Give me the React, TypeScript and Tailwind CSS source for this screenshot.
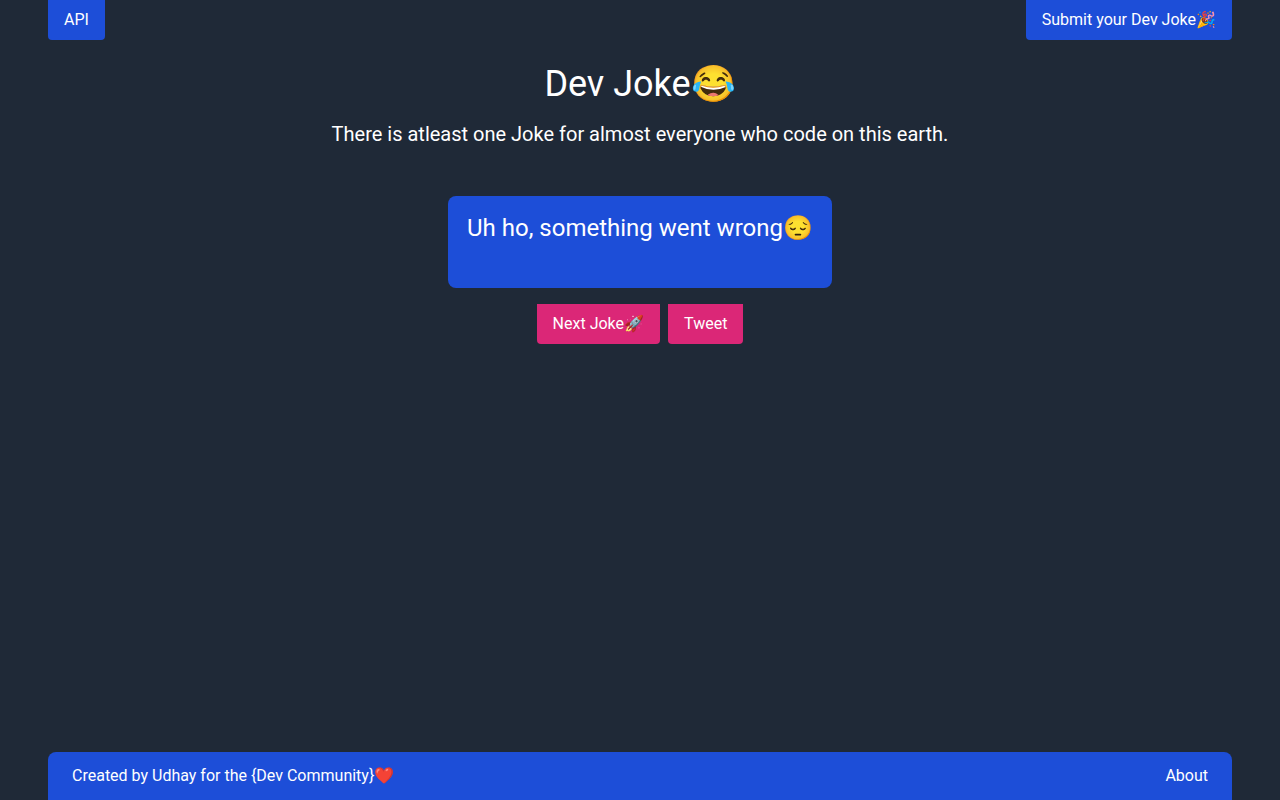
const links = {
  api: '#api',
  submit: '#submit',
  about: '#about',
};

const Header = () => {
  return (
    <header className="flex justify-between">
      <a href={links.api} className="bg-[#1d4ed8] px-4 py-2 rounded-b">
        API
      </a>
      <a href={links.submit} className="bg-[#1d4ed8] px-4 py-2 rounded-b">
        Submit your Dev Joke🎉
      </a>
    </header>
  );
};

const JokeCard = ({ joke }: { joke: string }) => {
  return (
    <div className="w-96 max-w-full bg-[#1d4ed8] rounded-lg px-4 pt-4 pb-11">
      <p className="text-2xl">{joke}</p>
    </div>
  );
};

const Footer = () => {
  return (
    <footer className="flex justify-between bg-[#1d4ed8] rounded-t-lg px-6 py-3">
      <p>Created by Udhay for the {'{Dev Community}'}❤️</p>
      <a href={links.about}>About</a>
    </footer>
  );
};

export default function App() {
  return (
    <div className="min-h-screen bg-[#1f2937] px-12 flex flex-col text-white font-['Roboto',sans-serif]">
      <Header />
      <main className="flex-1 flex flex-col items-center pt-6 text-center">
        <h1 className="text-4xl">Dev Joke😂</h1>
        <p className="text-xl mt-4">
          There is atleast one Joke for almost everyone who code on this earth.
        </p>
        <div className="mt-12">
          <JokeCard joke="Uh ho, something went wrong😔" />
        </div>
        <div className="flex gap-2 mt-4">
          <button className="bg-[#db2777] px-4 py-2 rounded-b">Next Joke🚀</button>
          <button className="bg-[#db2777] px-4 py-2 rounded-b">Tweet</button>
        </div>
      </main>
      <Footer />
    </div>
  );
}
